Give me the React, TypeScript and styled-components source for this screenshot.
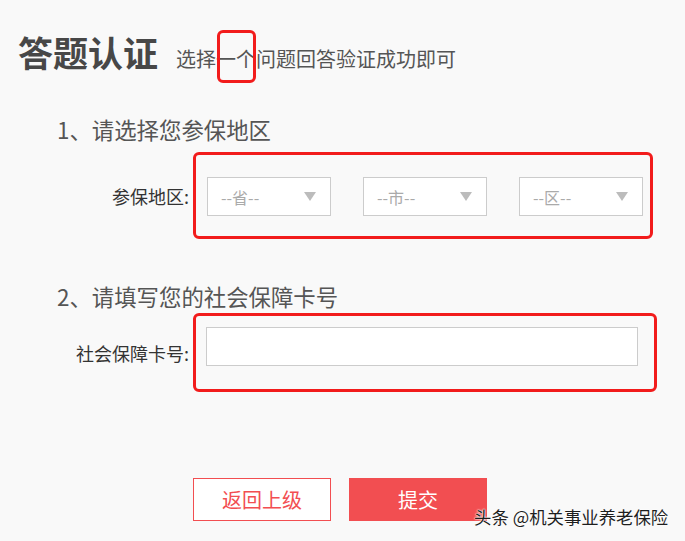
import React from 'react';
import styled, { createGlobalStyle } from 'styled-components';

const GlobalStyle = createGlobalStyle`
  html, body {
    margin: 0;
    padding: 0;
    background: #f9f9f9;
  }
  body {
    font-family: "Noto Sans CJK SC", "Noto Sans", sans-serif;
    color: #333;
  }
`;

const regions = ['--省--', '--市--', '--区--'];

const App: React.FC = () => {
  return (
    <Page>
      <GlobalStyle />
      <Header>
        <Title>答题认证</Title>
        <Subtitle>
          选择<Marked>一个</Marked>问题回答验证成功即可
        </Subtitle>
      </Header>

      <SectionHeading $top={42}>1、请选择您参保地区</SectionHeading>
      <FieldRow $top={10}>
        <FieldLabel>参保地区:</FieldLabel>
        <Highlight $width={460} $pad="22px 7px 20px 11px">
          <SelectGroup>
            {regions.map((r) => (
              <FakeSelect key={r}>
                <span>{r}</span>
                <Caret />
              </FakeSelect>
            ))}
          </SelectGroup>
        </Highlight>
      </FieldRow>

      <SectionHeading $top={44}>2、请填写您的社会保障卡号</SectionHeading>
      <FieldRow $top={4}>
        <FieldLabel>社会保障卡号:</FieldLabel>
        <Highlight $width={464} $pad="11px 16px 23px 10px">
          <TextInput type="text" />
        </Highlight>
      </FieldRow>

      <Actions>
        <Button $variant="outline">返回上级</Button>
        <Button $variant="solid">提交</Button>
      </Actions>

      <Watermark>头条 @机关事业养老保险</Watermark>
    </Page>
  );
};

const Page = styled.div`
  position: relative;
  width: 685px;
  height: 541px;
  overflow: hidden;
  box-sizing: border-box;
  padding-top: 30px;
`;

const Header = styled.div`
  display: flex;
  align-items: baseline;
  padding-left: 18px;
`;

const Title = styled.h1`
  margin: 0;
  font-size: 35px;
  line-height: 44px;
  font-weight: 700;
  color: #474747;
`;

const Subtitle = styled.p`
  margin: 0 0 0 18px;
  font-size: 20px;
  line-height: 24px;
  color: #555;
`;

const Marked = styled.span`
  position: relative;

  &::after {
    content: '';
    position: absolute;
    left: 1px;
    right: 0;
    top: -14px;
    bottom: -10px;
    border: 3px solid #f21c1c;
    border-radius: 6px;
  }
`;

const SectionHeading = styled.h2<{ $top: number }>`
  margin: ${({ $top }) => $top}px 0 0 57px;
  font-size: 22.4px;
  line-height: 26px;
  font-weight: 400;
  color: #555;
`;

const FieldRow = styled.div<{ $top: number }>`
  display: flex;
  align-items: center;
  gap: 4px;
  margin-top: ${({ $top }) => $top}px;
`;

const FieldLabel = styled.label`
  width: 189px;
  text-align: right;
  font-size: 18px;
  color: #333;
  white-space: nowrap;
`;

const Highlight = styled.div<{ $width: number; $pad: string }>`
  box-sizing: border-box;
  width: ${({ $width }) => $width}px;
  padding: ${({ $pad }) => $pad};
  border: 3px solid #f21c1c;
  border-radius: 6px;
`;

const SelectGroup = styled.div`
  display: flex;
  justify-content: space-between;
`;

const FakeSelect = styled.div`
  box-sizing: border-box;
  width: 124px;
  height: 39px;
  display: flex;
  align-items: center;
  justify-content: space-between;
  padding: 0 14px 0 13px;
  background: #fff;
  border: 1px solid #ccc;
  font-size: 16px;
  color: #aaa;
`;

const Caret = styled.i`
  width: 0;
  height: 0;
  border-left: 6px solid transparent;
  border-right: 6px solid transparent;
  border-top: 9px solid #bcbcbc;
`;

const TextInput = styled.input`
  box-sizing: border-box;
  display: block;
  width: 432px;
  height: 39px;
  border: 1px solid #ccc;
  background: #fff;
  outline: none;
  padding: 0 10px;
  font-size: 15px;
`;

const Actions = styled.div`
  display: flex;
  gap: 18px;
  margin: 86px 0 0 193px;
`;

const Button = styled.button<{ $variant: 'outline' | 'solid' }>`
  box-sizing: border-box;
  width: 138px;
  height: 43px;
  font-family: inherit;
  font-size: 20px;
  cursor: pointer;
  border: 1px solid #f24e51;
  background: ${({ $variant }) => ($variant === 'solid' ? '#f24e51' : '#fff')};
  color: ${({ $variant }) => ($variant === 'solid' ? '#fff' : '#f24e51')};
`;

const Watermark = styled.div`
  position: absolute;
  left: 474px;
  top: 505px;
  font-size: 17.4px;
  line-height: 24px;
  color: #1e1e1e;
  white-space: nowrap;
  text-shadow: 0 0 2px #fff, 0 0 2px #fff, 0 0 1px #fff;
`;

export default App;
